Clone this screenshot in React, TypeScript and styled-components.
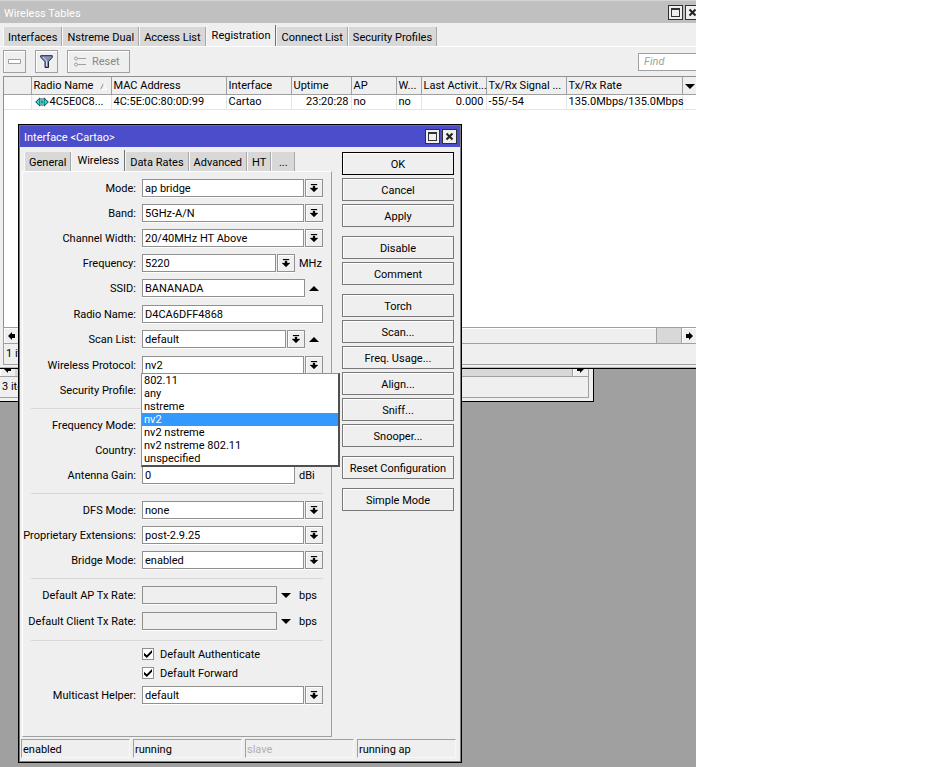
import React, { useState } from "react";
import styled, { createGlobalStyle } from "styled-components";

const GlobalStyle = createGlobalStyle`
  * { box-sizing: border-box; }
  html, body, #root { margin: 0; min-height: 100vh; background: #fff; }
  body, button, input, select, table {
    font-family: Roboto, "Liberation Sans", Arial, sans-serif;
    font-size: 11px;
    line-height: 15px;
    color: #000;
  }
  button, input, select { margin: 0; border-radius: 0; }
  svg { flex: none; }
`;

const Desktop = styled.main`
  position: relative;
  overflow: hidden;
  min-height: 100vh;
  margin-right: 231px;
  background: #a0a0a0;
`;

/* ---------- window frames ---------- */

const BackWindow = styled.section`
  position: absolute;
  left: 0;
  top: 200px;
  width: 594px;
  height: 202px;
  display: flex;
  flex-direction: column;
  justify-content: flex-end;
  padding: 0 4px 3px 0;
  background: #efefef;
  border-right: 1px solid #000;
  border-bottom: 1px solid #000;
`;

const TablesWindow = styled.section`
  position: absolute;
  left: 0;
  top: 0;
  width: calc(100% + 8px);
  height: 369px;
  display: flex;
  flex-direction: column;
  background: #efefef;
  border-bottom: 1px solid #000;
  box-shadow: inset 0 -1px #b8b8b8;
`;

const Dialog = styled.section`
  position: absolute;
  left: 18px;
  top: 124px;
  width: 444px;
  display: flex;
  flex-direction: column;
  background: #efefef;
  border: 1px solid #000;
  padding: 1px;
  box-shadow: inset -1px -1px #808080, inset 1px 1px #707080;
`;

const TitleBar = styled.header<{ $active?: boolean }>`
  display: flex;
  align-items: center;
  justify-content: space-between;
  height: ${(p) => (p.$active ? "21px" : "23px")};
  padding: ${(p) => (p.$active ? "0 3px 0 4px" : "0 4px")};
  color: #fff;
  background: ${(p) => (p.$active ? "#4c4dca" : "#c0c0c0")};
  border-top: ${(p) => (p.$active ? "0" : "1px solid #d4d4d4")};
`;

const Title = styled.h1`
  margin: 0;
  font-size: 11px;
  font-weight: 400;
  padding-top: 2px;
`;

const WindowButtons = styled.div`
  display: flex;
  gap: 2px;
`;

const WindowButton = styled.button`
  width: 15px;
  height: 15px;
  padding: 0;
  display: grid;
  place-items: center;
  background: #efefef;
  border: 1px solid #303030;
`;

/* ---------- tabs ---------- */

const TabStrip = styled.div`
  display: flex;
  align-items: flex-end;
  height: 23px;
  padding-left: 3px;
`;

const DialogTabStrip = styled(TabStrip)`
  height: 24px;
`;

const Tab = styled.button<{ $active?: boolean }>`
  height: ${(p) => (p.$active ? "22px" : "19px")};
  min-width: 24px;
  padding: ${(p) => (p.$active ? "0 5px 2px" : "1px 4px 0")};
  border: 0;
  border-left: 1px solid #f8f8f8;
  border-right: 1px solid ${(p) => (p.$active ? "#707070" : "#a8a8a8")};
  background: ${(p) => (p.$active ? "#efefef" : "#d8d8d8")};
  margin-bottom: ${(p) => (p.$active ? "-1px" : "0")};
  white-space: nowrap;
`;

/* ---------- tables window ---------- */

const Toolbar = styled.div`
  display: flex;
  align-items: center;
  gap: 9px;
  height: 30px;
  padding: 0 0 0 3px;
  border-top: 1px solid #fff;
`;

const ToolButton = styled.button`
  display: flex;
  align-items: center;
  justify-content: center;
  gap: 6px;
  height: 23px;
  min-width: 23px;
  padding: 0 9px 0 6px;
  color: #888;
  background: #efefef;
  border: 1px solid #a0a0a0;
  box-shadow: inset 1px 1px #fff;
`;

const IconToolButton = styled(ToolButton)`
  padding: 0;
`;

const FindInput = styled.input`
  width: 74px;
  height: 18px;
  margin-left: auto;
  margin-right: -8px;
  padding: 0 5px;
  font-style: italic;
  border: 1px solid #a0a0a0;
  background: #fff;
  outline: 0;
  &::placeholder { color: #a0a0a0; opacity: 1; }
`;

const ListArea = styled.div`
  flex: 1;
  margin-left: 3px;
  background: #fff;
  border-left: 1px solid #909090;
  border-top: 1px solid #909090;
  overflow: hidden;
`;

const ListTable = styled.table`
  table-layout: fixed;
  width: 693px;
  border-collapse: collapse;
`;

const HeadCell = styled.th`
  height: 17px;
  padding: 2px 0 0 2px;
  font-weight: 400;
  text-align: left;
  white-space: nowrap;
  background: #efefef;
  border-right: 1px solid #a0a0a0;
  border-bottom: 1px solid #a0a0a0;
  line-height: 14px;
`;

const MenuHeadCell = styled(HeadCell)`
  border-right: 0;
`;

const HeadContent = styled.span`
  display: flex;
  align-items: center;
  justify-content: space-between;
  padding-right: 4px;
`;

const Cell = styled.td<{ $right?: boolean }>`
  height: 15px;
  padding: 0 2px;
  line-height: 14px;
  white-space: nowrap;
  text-align: ${(p) => (p.$right ? "right" : "left")};
  border-right: 1px solid #e4e4e4;
  border-bottom: 1px solid #e4e4e4;
`;

const RadioCell = styled.span`
  display: flex;
  align-items: center;
  padding-left: 1px;
  gap: 1px;
`;

const ScrollRow = styled.div`
  display: flex;
  flex: none;
  height: 17px;
  margin: 0 7px 0 3px;
  border: 1px solid #a0a0a0;
  border-right: 0;
  background: #d8d8d8;
`;

const ScrollButton = styled.button`
  width: 15px;
  padding: 0;
  display: grid;
  place-items: center;
  background: #efefef;
  border: 0;
  box-shadow: inset 1px 1px #fff;
`;

const ScrollThumb = styled.div`
  flex: 1;
  background: #efefef;
  border-left: 1px solid #a0a0a0;
  border-right: 1px solid #a0a0a0;
  box-shadow: inset 1px 1px #fff;
`;

const ScrollTrack = styled.div<{ $grow?: boolean }>`
  flex: ${(p) => (p.$grow ? "1" : "0 0 25px")};
  border-right: 1px solid #a0a0a0;
`;

const ItemCount = styled.footer`
  flex: none;
  height: 21px;
  margin: 0 0 3px 3px;
  padding: 2px;
  border-left: 1px solid #a0a0a0;
  border-bottom: 1px solid #a0a0a0;
`;

const BackItemCount = styled(ItemCount)`
  margin: 0;
  border-left: 0;
  border-right: 1px solid #a0a0a0;
`;

const BackScrollRow = styled(ScrollRow)`
  margin: 0;
  border-left: 0;
  border-right: 1px solid #a0a0a0;
`;

/* ---------- dialog ---------- */

const DialogBody = styled.div`
  display: flex;
  padding: 0 6px 0 1px;
`;

const FormSide = styled.div`
  flex: 0 0 311px;
  min-width: 0;
  display: flex;
  flex-direction: column;
`;

const Panel = styled.form`
  flex: 1;
  margin-left: 1px;
  padding: 7px 8px 32px;
  border-top: 1px solid #fff;
  border-left: 1px solid #fff;
  border-right: 1px solid #a0a0a0;
  border-bottom: 1px solid #a0a0a0;
`;

const FieldGroup = styled.div`
  display: flex;
  flex-direction: column;
  gap: 7px;
  & + & {
    margin-top: 9px;
    padding-top: 7px;
    border-top: 1px solid #d8d8d8;
  }
`;

const FieldRow = styled.div<{ $tall?: boolean }>`
  display: flex;
  align-items: flex-start;
  justify-content: flex-end;
  height: ${(p) => (p.$tall ? "19px" : "18px")};
`;

const FieldLabel = styled.label`
  flex: 1 1 0;
  min-width: 0;
  display: flex;
  justify-content: flex-end;
  padding: 2px 6px 0 0;
  margin-left: -8px;
  white-space: nowrap;
`;

const Control = styled.div`
  position: relative;
  display: flex;
  flex: 0 0 181px;
  min-width: 0;
`;

const TextInput = styled.input`
  flex: 1 1 0;
  width: 0;
  min-width: 0;
  height: 18px;
  padding: 1px 2px 0;
  background: #fff;
  border: 1px solid #909090;
  box-shadow: 0 1px #fff;
  outline: 0;
  &:disabled { background: #efefef; }
`;

const SelectInput = styled.select`
  flex: 1 1 0;
  width: 0;
  min-width: 0;
  height: 18px;
  padding: 1px 2px 0;
  appearance: none;
  background: #fff;
  border: 1px solid #909090;
  box-shadow: 0 1px #fff;
  outline: 0;
`;

const DropButton = styled.button`
  flex: none;
  width: 18px;
  height: 18px;
  margin-left: 1px;
  padding: 0;
  display: grid;
  place-items: center;
  background: #efefef;
  border: 1px solid #909090;
  box-shadow: inset 1px 1px #fff, 0 1px #fff;
`;

const Expander = styled.button`
  flex: none;
  width: 18px;
  height: 18px;
  padding: 0;
  display: grid;
  place-items: center;
  background: none;
  border: 0;
`;

const Unit = styled.span`
  flex: none;
  width: 28px;
  padding: 2px 0 0 4px;
`;

const OptionList = styled.ul`
  position: absolute;
  z-index: 2;
  left: -1px;
  top: 17px;
  width: 199px;
  margin: 0;
  padding: 0;
  list-style: none;
  background: #fff;
  border: 1px solid #909090;
  border-right: 2px solid #505050;
  border-bottom: 2px solid #505050;
`;

const OptionItem = styled.li<{ $selected?: boolean }>`
  height: 13px;
  padding-left: 2px;
  line-height: 14px;
  cursor: default;
  color: ${(p) => (p.$selected ? "#fff" : "#000")};
  background: ${(p) => (p.$selected ? "#3399ff" : "transparent")};
`;

const CheckLabel = styled.label`
  display: flex;
  align-items: center;
  gap: 6px;
  width: 181px;
  height: 12px;
  margin-left: auto;
`;

const CheckBox = styled.input`
  appearance: none;
  width: 12px;
  height: 12px;
  display: grid;
  place-items: center;
  background: #fff;
  border: 1px solid #909090;
  &:checked::after {
    content: "";
    width: 8px;
    height: 8px;
    background: #000;
    clip-path: polygon(0 35%, 35% 65%, 100% 0, 100% 35%, 35% 100%, 0 70%);
  }
`;

const ButtonColumn = styled.div`
  flex: 1;
  min-width: 0;
  display: flex;
  flex-direction: column;
  gap: 9px;
  padding: 5px 0 0 10px;
`;

const ButtonGroup = styled.div`
  display: flex;
  flex-direction: column;
  gap: 3px;
`;

const ActionButton = styled.button<{ $default?: boolean }>`
  height: 23px;
  padding: 1px 0 0;
  background: #efefef;
  border: 1px solid ${(p) => (p.$default ? "#000" : "#787878")};
  box-shadow: inset 1px 1px #fff;
  white-space: nowrap;
`;

const StatusBar = styled.footer`
  display: grid;
  grid-template-columns: repeat(3, 109px) 1fr;
  gap: 3px;
  padding: 2px 4px 3px 1px;
`;

const StatusCell = styled.span<{ $dim?: boolean }>`
  height: 19px;
  padding: 2px 1px;
  color: ${(p) => (p.$dim ? "#b0b0b0" : "#000")};
  border-top: 1px solid #a0a0a0;
  border-left: 1px solid #a0a0a0;
  border-right: 1px solid #f8f8f8;
  border-bottom: 1px solid #f8f8f8;
`;

/* ---------- icons ---------- */

const MaximizeIcon = () => (
  <svg width="11" height="11" viewBox="0 0 11 11" shapeRendering="crispEdges">
    <path d="M1.5 1.5h8v8h-8z M1.5 2.5h8" fill="none" stroke="#333" />
  </svg>
);
const CloseIcon = () => (
  <svg width="11" height="11" viewBox="0 0 11 11">
    <path d="M2.5 2.5l6 6M8.5 2.5l-6 6" fill="none" stroke="#222" strokeWidth="2" />
  </svg>
);
const DropIcon = () => (
  <svg width="8" height="8" viewBox="0 0 8 8">
    <path d="M1 0h6v1H1zM3 2h2v2h3L4 8 0 4h3z" stroke="#000" strokeWidth=".3" />
  </svg>
);
const UpIcon = () => (
  <svg width="10" height="5" viewBox="0 0 10 5"><path d="M0 5L5 0l5 5z" /></svg>
);
const DownIcon = () => (
  <svg width="10" height="5" viewBox="0 0 10 5"><path d="M0 0h10L5 5z" /></svg>
);
const ArrowIcon = ({ left }: { left?: boolean }) => (
  <svg width="7" height="8" viewBox="0 0 7 8">
    <path d={left ? "M0 4l4-4v2h3v4H4v2z" : "M7 4L3 0v2H0v4h3v2z"} />
  </svg>
);
const MinusIcon = () => (
  <svg width="13" height="5" viewBox="0 0 13 5"><path d="M.5.5h12v4H.5z" fill="#fff" stroke="#a0a0a0" /></svg>
);
const FunnelIcon = () => (
  <svg width="13" height="14" viewBox="0 0 13 14">
    <path d="M.7.7h11.6v1.6L8.5 6.5v6h-3.5v-6L.7 2.3z" fill="#8290bb" stroke="#202438" />
    <path d="M3 2l3.5 4v5" fill="none" stroke="#d4dcf4" />
  </svg>
);
const ResetIcon = () => (
  <svg width="12" height="11" viewBox="0 0 12 11" fill="none" stroke="#a0a0a0">
    <circle cx="2" cy="2.5" r="1.5" /><circle cx="2" cy="8.5" r="1.5" />
    <path d="M4 2.5h8M4 8.5h8" />
  </svg>
);
const SortIcon = () => (
  <svg width="7" height="7" viewBox="0 0 7 7"><path d="M.5 6.5L3.5.5" stroke="#909090" /><path d="M3.5.5l3 6h-6" fill="none" stroke="#fff" /></svg>
);
const RadioIcon = () => (
  <svg width="14" height="10" viewBox="0 0 14 10">
    <path d="M.7 5L5 .9v8.2z M13.3 5L9 .9v8.2z" fill="#25d9d9" stroke="#064848" />
    <path d="M5 4h4v2H5z" fill="#25d9d9" /><path d="M7 1v8" stroke="#064848" />
  </svg>
);

/* ---------- data ---------- */

const mainTabs = ["Interfaces", "Nstreme Dual", "Access List", "Registration", "Connect List", "Security Profiles"];
const dialogTabs = ["General", "Wireless", "Data Rates", "Advanced", "HT", "..."];
const columns = ["MAC Address", "Interface", "Uptime", "AP", "W...", "Last Activit...", "Tx/Rx Signal ...", "Tx/Rx Rate"];
const columnWidths = [27, 80, 115, 65, 60, 45, 25, 65, 80, 116, 15];
const protocols = ["802.11", "any", "nstreme", "nv2", "nv2 nstreme", "nv2 nstreme 802.11", "unspecified"];
const actions = [
  ["OK", "Cancel", "Apply"],
  ["Disable", "Comment"],
  ["Torch", "Scan...", "Freq. Usage...", "Align...", "Sniff...", "Snooper..."],
  ["Reset Configuration"],
  ["Simple Mode"],
];

interface Field {
  label: string;
  value: string;
  drop?: boolean;
  unit?: string;
  toggle?: "up" | "down";
  options?: string[];
}

const groups: Field[][] = [
  [
    { label: "Mode", value: "ap bridge", drop: true },
    { label: "Band", value: "5GHz-A/N", drop: true },
    { label: "Channel Width", value: "20/40MHz HT Above", drop: true },
    { label: "Frequency", value: "5220", drop: true, unit: "MHz" },
    { label: "SSID", value: "BANANADA", toggle: "up" },
    { label: "Radio Name", value: "D4CA6DFF4868" },
    { label: "Scan List", value: "default", drop: true, toggle: "up" },
    { label: "Wireless Protocol", value: "nv2", drop: true, options: protocols },
    { label: "Security Profile", value: "", drop: true },
  ],
  [
    { label: "Frequency Mode", value: "", drop: true },
    { label: "Country", value: "", drop: true },
    { label: "Antenna Gain", value: "0", unit: "dBi" },
  ],
  [
    { label: "DFS Mode", value: "none", drop: true },
    { label: "Proprietary Extensions", value: "post-2.9.25", drop: true },
    { label: "Bridge Mode", value: "enabled", drop: true },
  ],
  [
    { label: "Default AP Tx Rate", value: "", toggle: "down", unit: "bps" },
    { label: "Default Client Tx Rate", value: "", toggle: "down", unit: "bps" },
  ],
];

function FormField({ field }: { field: Field }) {
  const [value, setValue] = useState(field.value);
  const [open, setOpen] = useState(Boolean(field.options));
  const id = field.label.toLowerCase().replace(/ /g, "-");
  return (
    <FieldRow $tall={Boolean(field.toggle)}>
      <FieldLabel htmlFor={id}>{field.label}:</FieldLabel>
      <Control>
        {field.drop ? (
          <SelectInput id={id} value={value} onChange={(e) => setValue(e.target.value)}>
            {(field.options ?? [field.value]).map((o) => <option key={o}>{o}</option>)}
          </SelectInput>
        ) : (
          <TextInput
            id={id}
            value={value}
            disabled={field.toggle === "down"}
            onChange={(e) => setValue(e.target.value)}
          />
        )}
        {field.drop && (
          <DropButton type="button" aria-label={`Open ${field.label}`} onClick={() => field.options && setOpen(!open)}>
            <DropIcon />
          </DropButton>
        )}
        {field.toggle && (
          <Expander type="button" aria-label={`Toggle ${field.label}`}>
            {field.toggle === "up" ? <UpIcon /> : <DownIcon />}
          </Expander>
        )}
        {field.unit && <Unit>{field.unit}</Unit>}
        {field.options && open && (
          <OptionList role="listbox" aria-label={field.label}>
            {field.options.map((o) => (
              <OptionItem
                key={o}
                role="option"
                aria-selected={o === value}
                $selected={o === value}
                onClick={() => { setValue(o); setOpen(false); }}
              >
                {o}
              </OptionItem>
            ))}
          </OptionList>
        )}
      </Control>
    </FieldRow>
  );
}

function FrameButtons() {
  return (
    <WindowButtons>
      <WindowButton type="button" aria-label="Maximize"><MaximizeIcon /></WindowButton>
      <WindowButton type="button" aria-label="Close"><CloseIcon /></WindowButton>
    </WindowButtons>
  );
}

function WirelessTables() {
  const [tab, setTab] = useState("Registration");
  return (
    <TablesWindow aria-label="Wireless Tables">
      <TitleBar>
        <Title>Wireless Tables</Title>
        <FrameButtons />
      </TitleBar>
      <TabStrip role="tablist">
        {mainTabs.map((t) => (
          <Tab key={t} type="button" role="tab" aria-selected={t === tab} $active={t === tab} onClick={() => setTab(t)}>{t}</Tab>
        ))}
      </TabStrip>
      <Toolbar>
        <IconToolButton type="button" aria-label="Remove"><MinusIcon /></IconToolButton>
        <IconToolButton type="button" aria-label="Filter"><FunnelIcon /></IconToolButton>
        <ToolButton type="button"><ResetIcon />Reset</ToolButton>
        <FindInput placeholder="Find" aria-label="Find" />
      </Toolbar>
      <ListArea>
        <ListTable>
          <colgroup>{columnWidths.map((w, i) => <col key={i} width={w} />)}</colgroup>
          <thead>
            <tr>
              <HeadCell />
              <HeadCell><HeadContent>Radio Name<SortIcon /></HeadContent></HeadCell>
              {columns.map((c) => <HeadCell key={c}>{c}</HeadCell>)}
              <MenuHeadCell aria-label="Columns"><DownIcon /></MenuHeadCell>
            </tr>
          </thead>
          <tbody>
            <tr>
              <Cell />
              <Cell><RadioCell><RadioIcon />4C5E0C8...</RadioCell></Cell>
              <Cell>4C:5E:0C:80:0D:99</Cell>
              <Cell>Cartao</Cell>
              <Cell $right>23:20:28</Cell>
              <Cell>no</Cell>
              <Cell>no</Cell>
              <Cell $right>0.000</Cell>
              <Cell>-55/-54</Cell>
              <Cell>135.0Mbps/135.0Mbps</Cell>
              <Cell />
            </tr>
          </tbody>
        </ListTable>
      </ListArea>
      <ScrollRow>
        <ScrollButton type="button" aria-label="Scroll left"><ArrowIcon left /></ScrollButton>
        <ScrollThumb />
        <ScrollTrack />
        <ScrollButton type="button" aria-label="Scroll right"><ArrowIcon /></ScrollButton>
      </ScrollRow>
      <ItemCount>1 item</ItemCount>
    </TablesWindow>
  );
}

function InterfaceDialog() {
  const [tab, setTab] = useState("Wireless");
  return (
    <Dialog role="dialog" aria-label="Interface <Cartao>">
      <TitleBar $active>
        <Title as="h2">Interface &lt;Cartao&gt;</Title>
        <FrameButtons />
      </TitleBar>
      <DialogBody>
        <FormSide>
          <DialogTabStrip role="tablist">
            {dialogTabs.map((t) => (
              <Tab key={t} type="button" role="tab" aria-selected={t === tab} $active={t === tab} onClick={() => setTab(t)}>{t}</Tab>
            ))}
          </DialogTabStrip>
          <Panel>
            {groups.map((group, i) => (
              <FieldGroup key={i}>
                {group.map((f) => <FormField key={f.label} field={f} />)}
              </FieldGroup>
            ))}
            <FieldGroup>
              <CheckLabel><CheckBox type="checkbox" defaultChecked />Default Authenticate</CheckLabel>
              <CheckLabel><CheckBox type="checkbox" defaultChecked />Default Forward</CheckLabel>
              <FormField field={{ label: "Multicast Helper", value: "default", drop: true }} />
            </FieldGroup>
          </Panel>
        </FormSide>
        <ButtonColumn>
          {actions.map((group) => (
            <ButtonGroup key={group[0]}>
              {group.map((a) => <ActionButton key={a} type="button" $default={a === "OK"}>{a}</ActionButton>)}
            </ButtonGroup>
          ))}
        </ButtonColumn>
      </DialogBody>
      <StatusBar>
        <StatusCell>enabled</StatusCell>
        <StatusCell>running</StatusCell>
        <StatusCell $dim>slave</StatusCell>
        <StatusCell>running ap</StatusCell>
      </StatusBar>
    </Dialog>
  );
}

export default function App() {
  return (
    <>
      <GlobalStyle />
      <Desktop>
        <BackWindow aria-label="Interface List">
          <BackScrollRow>
            <ScrollButton type="button" aria-label="Scroll left"><ArrowIcon left /></ScrollButton>
            <ScrollTrack $grow />
            <ScrollButton type="button" aria-label="Scroll right"><ArrowIcon /></ScrollButton>
          </BackScrollRow>
          <BackItemCount>3 items</BackItemCount>
        </BackWindow>
        <WirelessTables />
        <InterfaceDialog />
      </Desktop>
    </>
  );
}
